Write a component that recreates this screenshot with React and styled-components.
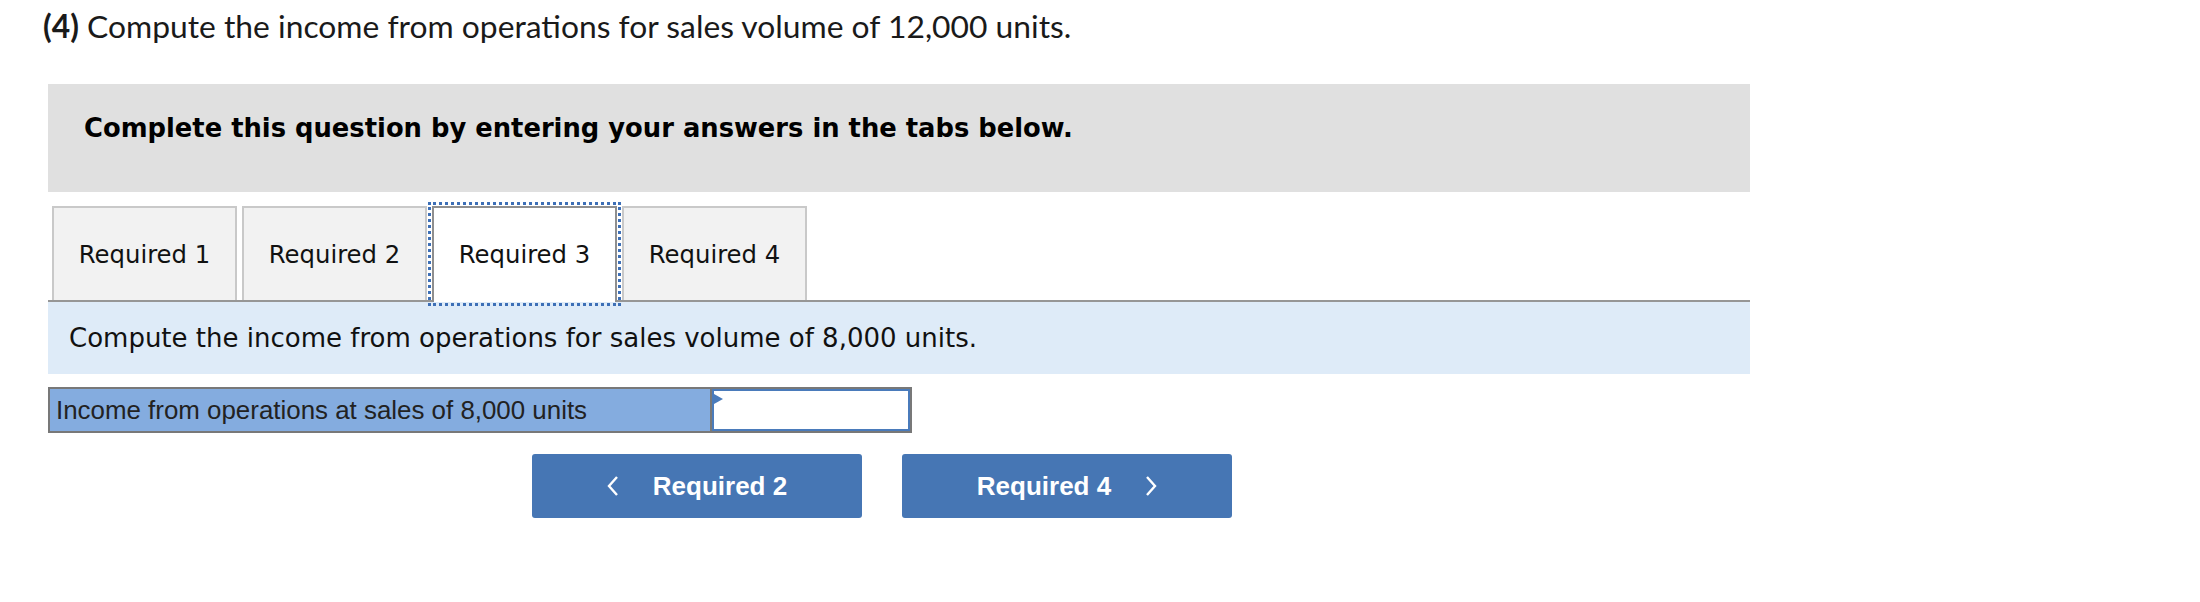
import React from 'react';
import styled, { createGlobalStyle } from 'styled-components';

const Global = createGlobalStyle`
  body {
    margin: 0;
    background: #fff;
    font-family: "DejaVu Sans", Verdana, sans-serif;
  }
`;

const Page = styled.div`
  width: 2200px;
  height: 602px;
  overflow: hidden;
  background: #fff;
`;

const Title = styled.div`
  padding: 6px 0 0 43px;
  height: 84px;
  box-sizing: border-box;
  font-family: Lato, "Open Sans", sans-serif;
  font-size: 31.8px;
  line-height: 40px;
  color: #1a1a1a;

  b {
    font-weight: 700;
  }
`;

const Body = styled.div`
  margin-left: 48px;
  width: 1702px;
`;

const Banner = styled.div`
  background: #e0e0e0;
  height: 108px;
  box-sizing: border-box;
  padding: 27px 36px 0;
  font-weight: 700;
  font-size: 25.8px;
  line-height: 34px;
  color: #000;
`;

const TabBar = styled.div`
  display: flex;
  gap: 5px;
  margin-top: 14px;
  padding-left: 4px;
  border-bottom: 2px solid #969696;
  height: 94px;
`;

const Tab = styled.div`
  width: 185px;
  height: ${p => (p.$active ? '96px' : '94px')};
  box-sizing: border-box;
  display: flex;
  align-items: center;
  justify-content: center;
  font-size: 24.3px;
  color: #111;
  background: ${p => (p.$active ? '#fff' : '#f2f2f2')};
  border: 2px solid ${p => (p.$active ? '#8f8f8f' : '#c9c9c9')};
  border-bottom: none;
  outline: ${p => (p.$active ? '3px dotted #3d6fb6' : 'none')};
  outline-offset: 1px;
  position: relative;
  z-index: ${p => (p.$active ? 1 : 0)};
  padding-bottom: ${p => (p.$active ? '2px' : '0')};
`;

const Prompt = styled.div`
  background: #deebf8;
  height: 72px;
  box-sizing: border-box;
  padding-left: 21px;
  display: flex;
  align-items: center;
  font-size: 26px;
  color: #111;
`;

const AnswerRow = styled.div`
  margin-top: 13px;
  width: 864px;
  height: 46px;
  box-sizing: border-box;
  display: flex;
  border: 2px solid #787878;
  background: #787878;
  gap: 2px;
`;

const AnswerLabel = styled.div`
  flex: 1;
  background: #84acdf;
  font-family: "Liberation Sans", Arial, sans-serif;
  font-size: 25.9px;
  color: #222;
  display: flex;
  align-items: center;
  padding-left: 6px;
`;

const AnswerInput = styled.div`
  width: 198px;
  box-sizing: border-box;
  background: #fff;
  border: 2px solid #4a7bbb;
  position: relative;
`;

const Marker = styled.span`
  position: absolute;
  left: 0;
  top: 3px;
  width: 0;
  height: 0;
  border-top: 5px solid transparent;
  border-bottom: 5px solid transparent;
  border-left: 9px solid #4a7bbb;
`;

const NavRow = styled.div`
  display: flex;
  gap: 40px;
  margin-top: 21px;
  padding-left: 484px;
`;

const NavButton = styled.div`
  width: 330px;
  height: 64px;
  border-radius: 3px;
  background: #4676b4;
  color: #fff;
  font-family: "Liberation Sans", Arial, sans-serif;
  font-weight: 700;
  font-size: 26px;
  display: flex;
  align-items: center;
  justify-content: center;
  gap: 34px;
`;

const Chevron = ({ dir }) => (
  <svg width="12" height="22" viewBox="0 0 12 22">
    <polyline
      points={dir === 'left' ? '10,2 2,11 10,20' : '2,2 10,11 2,20'}
      fill="none"
      stroke="#fff"
      strokeWidth="2.4"
    />
  </svg>
);

const tabs = ['Required 1', 'Required 2', 'Required 3', 'Required 4'];

export default function App() {
  return (
    <Page>
      <Global />
      <Title>
        <b>(4)</b> Compute the income from operations for sales volume of 12,000 units.
      </Title>
      <Body>
        <Banner>Complete this question by entering your answers in the tabs below.</Banner>
        <TabBar>
          {tabs.map(t => (
            <Tab key={t} $active={t === 'Required 3'}>{t}</Tab>
          ))}
        </TabBar>
        <Prompt>Compute the income from operations for sales volume of 8,000 units.</Prompt>
        <AnswerRow>
          <AnswerLabel>Income from operations at sales of 8,000 units</AnswerLabel>
          <AnswerInput>
            <Marker />
          </AnswerInput>
        </AnswerRow>
        <NavRow>
          <NavButton>
            <Chevron dir="left" />
            <span>Required 2</span>
          </NavButton>
          <NavButton>
            <span>Required 4</span>
            <Chevron dir="right" />
          </NavButton>
        </NavRow>
      </Body>
    </Page>
  );
}
